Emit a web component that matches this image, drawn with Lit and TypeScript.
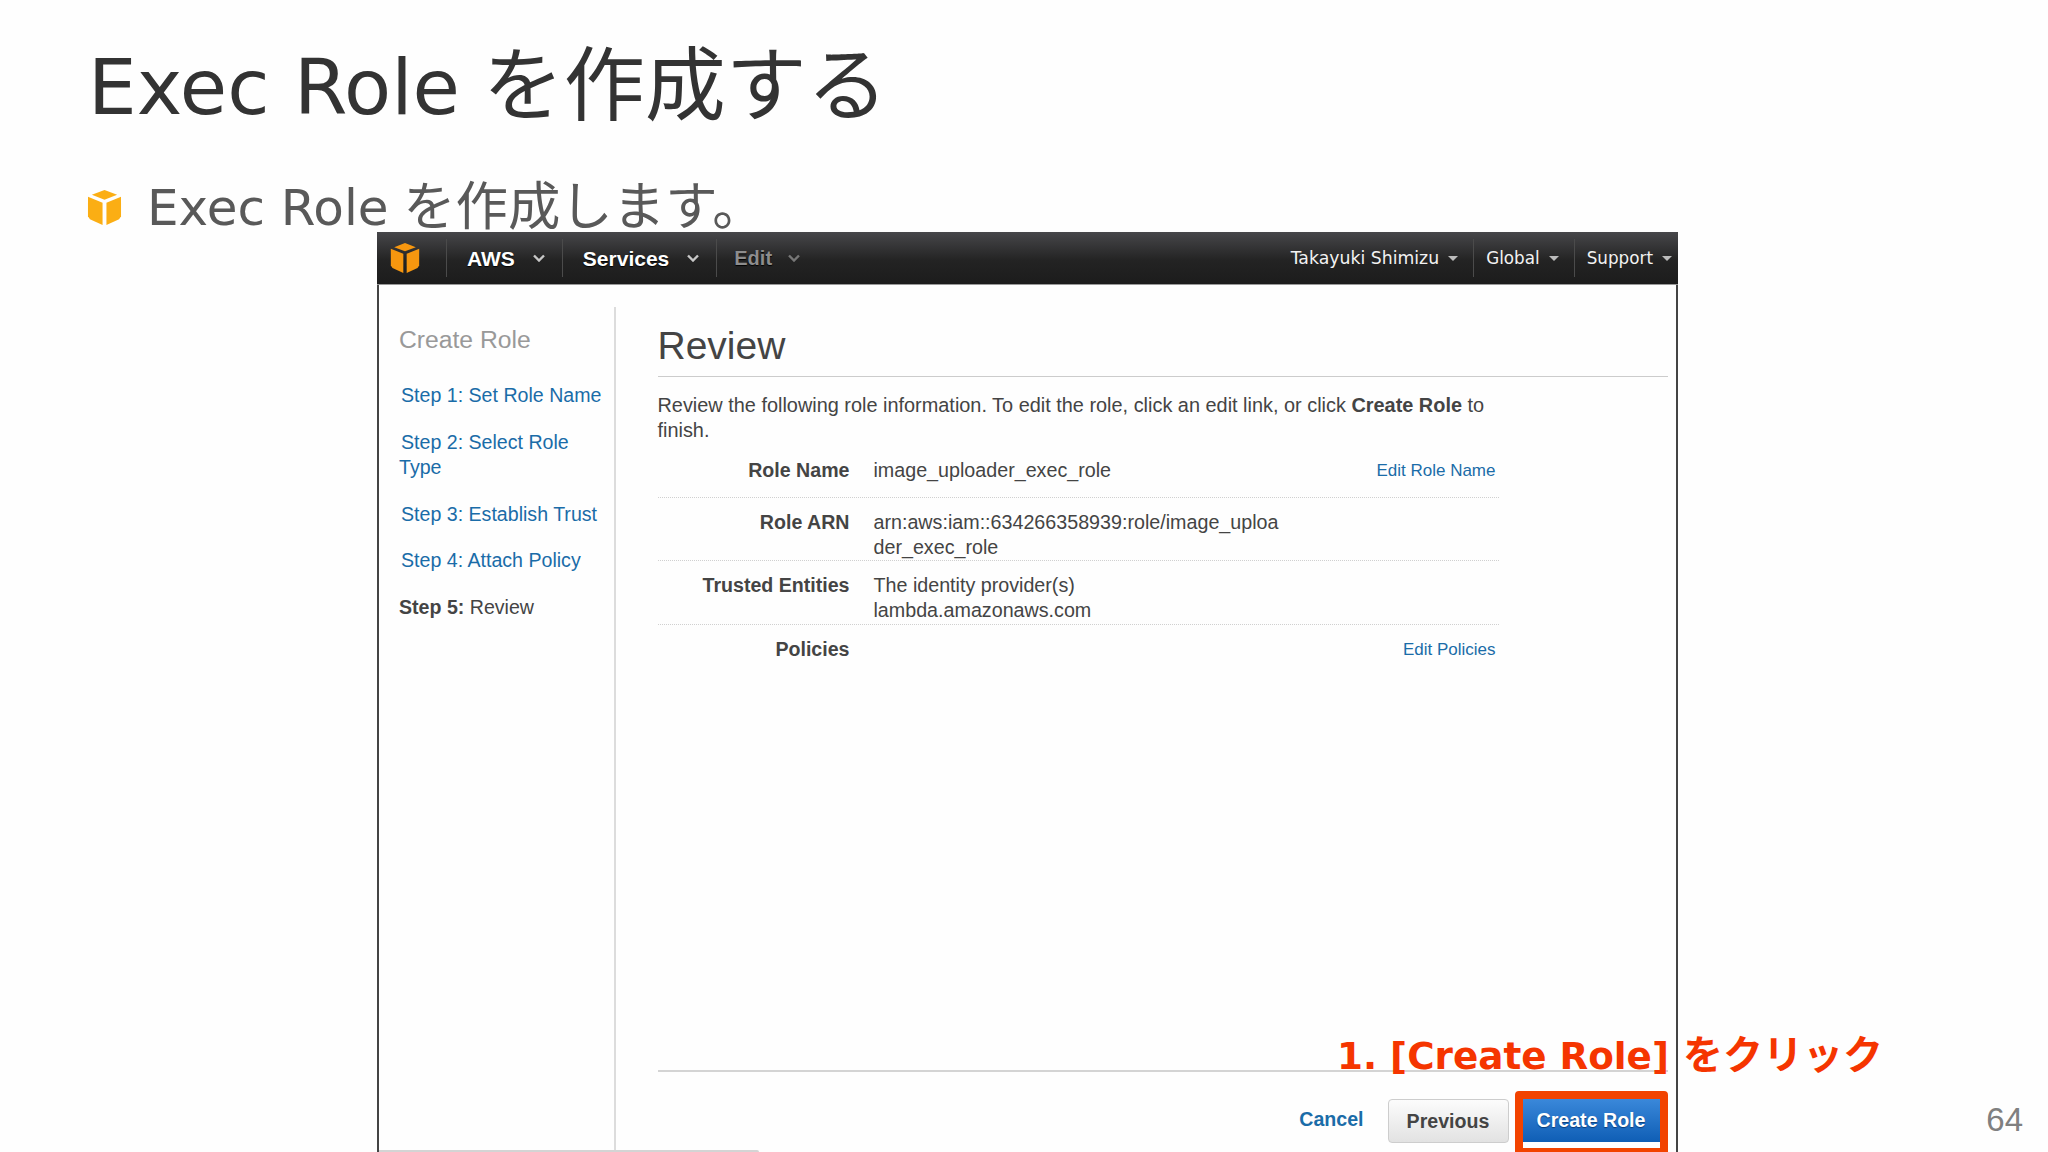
import { LitElement, css, html } from 'lit';
import { customElement } from 'lit/decorators.js';

const cube = (cls: string) => html`
  <svg class=${cls} viewBox="0 0 34 36" fill="currentColor">
    <path d="M17 0 30 5 17 10 4 5Z" />
    <path d="M0 7 15 13V36L2 30 0 27Z" />
    <path d="M34 7 19 13V36L32 30 34 27Z" />
  </svg>
`;

const chevron = html`
  <svg class="chev" viewBox="0 0 12 8"><path d="M1 1.5 6 6.5 11 1.5" fill="none" stroke="currentColor" stroke-width="2.4" /></svg>
`;

@customElement('aws-console')
export class AwsConsole extends LitElement {
  static styles = css`
    :host {
      display: flex;
      flex-direction: column;
      position: absolute;
      left: 377px;
      top: 232px;
      width: 1301px;
      height: 920px;
      box-sizing: border-box;
      background: #fefefe;
      border-left: 2px solid #444;
      border-right: 2px solid #444;
      font-family: "Liberation Sans", sans-serif;
      font-size: 19.6px;
      line-height: 25px;
      color: #444;
    }

    a { color: #1a6ca8; }

    .nav {
      display: flex;
      align-items: center;
      height: 52px;
      margin: 0 -2px;
      flex: none;
      border-radius: 2px 2px 0 0;
      background: linear-gradient(#47474a, #232323 55%, #1c1c1c);
      color: #fff;
      box-shadow: 0 1px 0 #999;
    }
    .logo { width: 32px; height: 30px; margin-left: 12px; margin-right: 25px; color: #f7970f; }
    .menu {
      display: flex;
      align-items: center;
      gap: 18px;
      height: 38px;
      border-left: 1px solid #4b4b4b;
      font-weight: bold;
      font-size: 21px;
      padding: 0 17px 0 20px;
      text-shadow: 0 1px 1px #000;
    }
    .menu.off { color: #8d8d8d; font-size: 20px; padding-left: 17px; gap: 16px; }
    .chev { width: 12px; height: 8px; color: #c8c8c8; }
    .menu.off .chev { color: #777; }
    .spacer { flex: 1; }
    .acct {
      display: flex;
      align-items: center;
      gap: 9px;
      height: 38px;
      padding: 0 6px 0 12px;
      border-left: 1px solid #4b4b4b;
      font-family: "DejaVu Sans", sans-serif;
      font-size: 16.8px;
      color: #f2f2f2;
    }
    .acct.first { border-left: none; padding-right: 15px; font-size: 17.3px; }
    .acct.mid { padding-right: 15px; }
    .caret {
      width: 0;
      height: 0;
      border-left: 5px solid transparent;
      border-right: 5px solid transparent;
      border-top: 5px solid #bbb;
    }

    .body { flex: 1; display: flex; min-height: 0; padding-top: 23px; }

    .side {
      flex: none;
      width: 237px;
      box-sizing: border-box;
      border-right: 2px solid #dcdcdc;
      padding-left: 20px;
    }
    .side h3 {
      margin: 19px 0 28px;
      font-size: 24.7px;
      line-height: 28px;
      font-weight: normal;
      color: #999;
    }
    .side p { margin: 0 0 20.6px; line-height: 26px; }
    .side p:first-of-type { margin-bottom: 21.6px; }
    .side p.two { margin-bottom: 20px; }
    .side a { padding-left: 2px; }
    .side a.wrap { display: block; text-indent: 2px; padding: 0; width: 180px; line-height: 25.6px; }

    .main { flex: 1; min-width: 0; padding-left: 41.5px; padding-right: 8.5px; display: flex; flex-direction: column; }
    .main h1 {
      margin: 16px 0 0;
      font-size: 39px;
      line-height: 46px;
      font-weight: normal;
      padding-bottom: 7px;
      border-bottom: 1px solid #ccc;
    }
    .intro { margin: 16px 0 0; width: 830px; font-size: 19.9px; }
    .rows { width: 841px; margin-top: 15px; }
    .row {
      display: grid;
      grid-template-columns: 192px 1fr;
      column-gap: 24px;
      box-sizing: border-box;
      font-size: 19.7px;
      border-bottom: 1px dotted #d0d0d0;
    }
    .row:last-child { border-bottom: none; }
    .row b { text-align: right; font-size: 19.6px; }
    .val { position: relative; }
    .val a { position: absolute; right: 3px; top: 0; font-size: 17px; }
    .r1 { height: 40px; }
    .r2 { height: 63px; padding-top: 12px; }
    .r3 { height: 64px; padding-top: 12px; }
    .r4 { padding-top: 12px; }

    .foot {
      margin-top: auto;
      flex: none;
      height: 82px;
      border-top: 2px solid #d4d4d4;
      display: flex;
      justify-content: flex-end;
      align-items: flex-start;
      padding-right: 8px;
      padding-top: 27px;
      box-sizing: border-box;
      font-weight: bold;
    }
    .foot a { margin-top: 8px; margin-right: 24px; line-height: 24px; }
    .btn {
      height: 44px;
      box-sizing: border-box;
      line-height: 42px;
      text-align: center;
      border-radius: 4px;
      background: linear-gradient(#fcfcfc, #e2e2e2);
      border: 1px solid #cdcdcd;
      width: 121px;
    }
    .create {
      position: relative;
      margin-top: -8px;
      margin-left: 6px;
      margin-right: -8px;
      width: 153px;
      height: 61px;
      box-sizing: border-box;
      border: 8px solid #f24300;
      border-bottom-width: 4px;
      border-radius: 4px 4px 0 0;
      background: #fff;
    }
    .create div {
      height: 43px;
      line-height: 43px;
      color: #fff;
      text-align: center;
      background: linear-gradient(#3a88da, #0f5eb5);
      text-shadow: 0 1px 1px #0a3c78;
    }
    .tail {
      position: absolute;
      left: 0;
      bottom: 0;
      width: 380px;
      height: 2px;
      background: #d4d4d4;
      border-radius: 0 3px 0 0;
    }
  `;

  render() {
    return html`
      <div class="nav">
        ${cube('logo')}
        <div class="menu">AWS ${chevron}</div>
        <div class="menu">Services ${chevron}</div>
        <div class="menu off">Edit ${chevron}</div>
        <div class="spacer"></div>
        <div class="acct first">Takayuki Shimizu <span class="caret"></span></div>
        <div class="acct mid">Global <span class="caret"></span></div>
        <div class="acct">Support <span class="caret"></span></div>
      </div>
      <div class="body">
        <div class="side">
          <h3>Create Role</h3>
          <p><a>Step 1: Set Role Name</a></p>
          <p class="two"><a class="wrap">Step 2: Select Role Type</a></p>
          <p><a>Step 3: Establish Trust</a></p>
          <p><a>Step 4: Attach Policy</a></p>
          <p><b>Step 5:</b> Review</p>
        </div>
        <div class="main">
          <h1>Review</h1>
          <p class="intro">Review the following role information. To edit the role, click an edit link, or click <b>Create Role</b> to finish.</p>
          <div class="rows">
            <div class="row r1">
              <b>Role Name</b>
              <div class="val">image_uploader_exec_role<a>Edit Role Name</a></div>
            </div>
            <div class="row r2">
              <b>Role ARN</b>
              <div class="val">arn:aws:iam::634266358939:role/image_uploa<br />der_exec_role</div>
            </div>
            <div class="row r3">
              <b>Trusted Entities</b>
              <div class="val">The identity provider(s)<br />lambda.amazonaws.com</div>
            </div>
            <div class="row r4">
              <b>Policies</b>
              <div class="val"><a>Edit Policies</a></div>
            </div>
          </div>
          <div class="foot">
            <a>Cancel</a>
            <div class="btn">Previous</div>
            <div class="create"><div>Create Role</div></div>
          </div>
        </div>
      </div>
      <div class="tail"></div>
    `;
  }
}

@customElement('app-root')
export class AppRoot extends LitElement {
  static styles = css`
    :host {
      display: block;
      position: relative;
      width: 2048px;
      height: 1152px;
      overflow: hidden;
      background: #fefefe;
      font-family: "DejaVu Sans", "Noto Sans CJK JP", sans-serif;
    }
    .slide { padding: 38px 0 0 88px; }
    h1 {
      margin: 0;
      font-size: 81px;
      line-height: 96px;
      font-weight: normal;
      color: #333;
      word-spacing: -3px;
    }
    h1 span { font-size: 77px; word-spacing: 0; }
    .bullet {
      display: flex;
      align-items: center;
      gap: 25px;
      margin: 39px 0 0 -1px;
      font-size: 52.4px;
      line-height: 64px;
      color: #595959;
      word-spacing: -2px;
    }
    .bullet svg { width: 35px; height: 35px; flex: none; color: #fbae14; }
    .bullet span span { font-size: 50px; word-spacing: 0; }
    .note {
      position: absolute;
      left: 1337px;
      top: 1031px;
      font-size: 40px;
      line-height: 48px;
      font-weight: bold;
      color: #f53500;
      white-space: nowrap;
    }
    .note span { font-size: 37.3px; }
    .page {
      position: absolute;
      right: 25px;
      top: 1100px;
      font-family: "Liberation Sans", sans-serif;
      font-size: 33px;
      line-height: 40px;
      color: #808080;
    }
  `;

  render() {
    return html`
      <div class="slide">
        <h1><span>Exec Role</span> を作成する</h1>
        <div class="bullet">${cube('')}<span><span>Exec Role</span> を作成します。</span></div>
      </div>
      <aws-console></aws-console>
      <div class="note"><span>1. [Create Role]</span> をクリック</div>
      <div class="page">64</div>
    `;
  }
}
